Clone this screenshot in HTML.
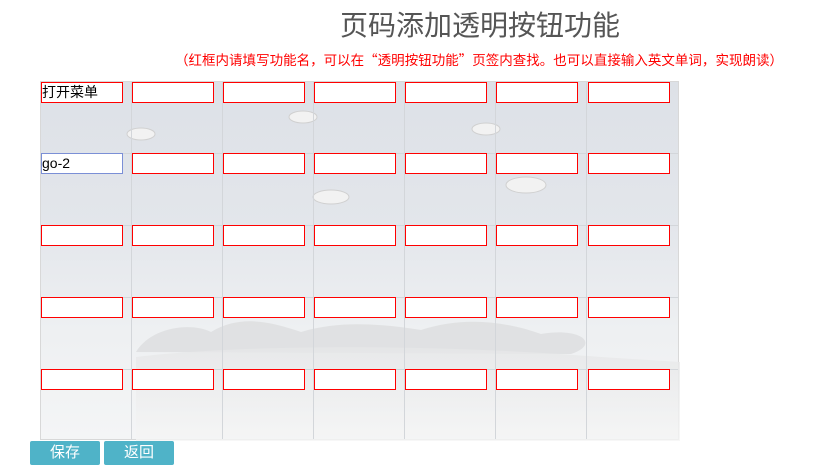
<!DOCTYPE html>
<html><head><meta charset="utf-8"><style>
body{margin:0;width:837px;height:471px;background:#fff;position:relative;overflow:hidden;font-family:"Liberation Sans","Noto Sans CJK SC",sans-serif}
.t{position:absolute;left:340px;top:6px;font-size:28px;color:#555;white-space:nowrap;line-height:40px}
.s{position:absolute;left:175px;top:50px;font-size:13.5px;color:#f00;white-space:nowrap;line-height:18px;font-family:"Noto Sans CJK SC",sans-serif;letter-spacing:0px}
.g{position:absolute;left:40px;top:81px;width:639px;height:359px;background:linear-gradient(#dde1e7 0%,#e3e6eb 40%,#eef0f2 70%,#f4f5f6 100%);border:1px solid #d8d8d8;box-sizing:border-box}
.v{position:absolute;top:0;bottom:0;width:1px;background:#d3d6da}
.h{position:absolute;left:0;right:0;height:1px;background:#d3d6da}
.i{position:absolute;width:82px;height:21px;background:#fff;border:1px solid #f00;box-sizing:border-box;font-size:14px;line-height:19px;color:#000;padding-left:0}
.b{position:absolute;top:441px;width:70px;height:24px;background:#4fb3c8;border-radius:2px;color:#fff;font-size:15px;text-align:center;line-height:24px}
</style></head><body>
<div class="t">页码添加透明按钮功能</div>
<div class="s">（红框内请填写功能名，可以在“透明按钮功能”页签内查找。也可以直接输入英文单词，实现朗读）</div>
<div class="g">
<svg width="639" height="359" style="position:absolute;left:0;top:0">
<defs><linearGradient id="hill" x1="0" y1="0" x2="0" y2="1"><stop offset="0" stop-color="#e6e7e8"/><stop offset="1" stop-color="#f5f5f5"/></linearGradient></defs>
<path d="M95 270 C110 245 150 240 170 250 C200 232 230 240 260 250 C300 238 340 242 380 248 C420 235 460 238 500 252 C540 245 560 262 530 272 Z" fill="#dcdddf" opacity=".8"/>
<path d="M95 275 C200 262 400 262 560 275 L639 280 L639 359 L95 359 Z" fill="url(#hill)" opacity=".8"/>
<g fill="#f2f2f2" stroke="#d0d0d0"><ellipse cx="100" cy="52" rx="14" ry="6"/><ellipse cx="262" cy="35" rx="14" ry="6"/><ellipse cx="445" cy="47" rx="14" ry="6"/><ellipse cx="485" cy="103" rx="20" ry="8"/><ellipse cx="290" cy="115" rx="18" ry="7"/></g>
</svg>
<div class="v" style="left:90px"></div><div class="v" style="left:181px"></div><div class="v" style="left:272px"></div><div class="v" style="left:363px"></div><div class="v" style="left:454px"></div><div class="v" style="left:545px"></div>
<div class="h" style="top:71px"></div><div class="h" style="top:143px"></div><div class="h" style="top:215px"></div><div class="h" style="top:287px"></div>
</div>
<div id="inputs"></div>
<script>
var xs=[41,132,223,314,405,496,588],ys=[82,153,225,297,369],h='';
ys.forEach(function(y,r){xs.forEach(function(x,c){var t='',st='';if(r==0&&c==0)t='打开菜单';if(r==1&&c==0){t='go-2';st='border-color:#7b8fd6;'}
h+='<div class="i" style="left:'+x+'px;top:'+y+'px;'+st+'">'+t+'</div>';});});
document.getElementById('inputs').innerHTML=h;
var s=document.querySelector('.s');var w=s.getBoundingClientRect().width;s.style.letterSpacing=((608-w)/45)+'px';
</script>
<div class="b" style="left:30px">保存</div>
<div class="b" style="left:104px">返回</div>
</body></html>
